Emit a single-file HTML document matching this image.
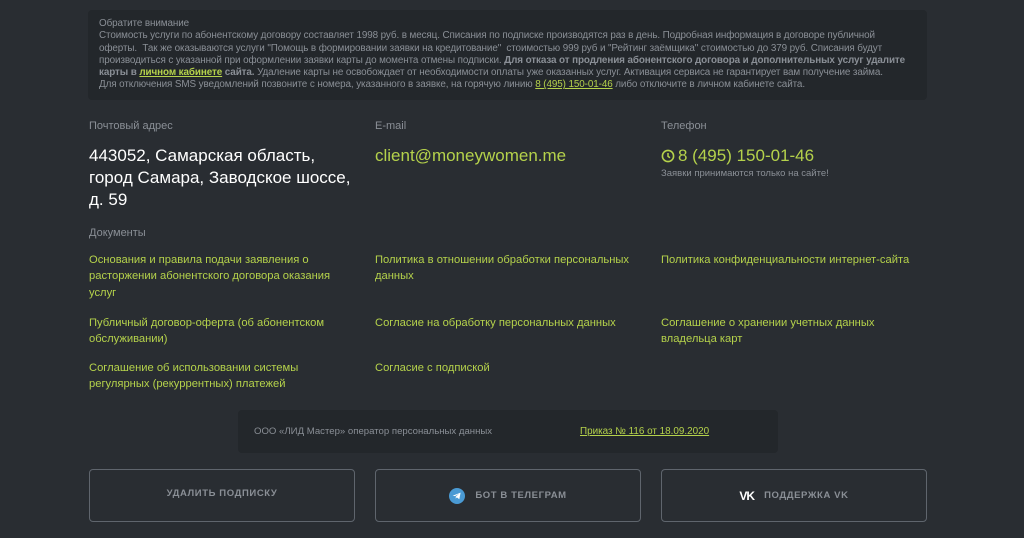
<!DOCTYPE html>
<html><head><meta charset="utf-8"><style>
*{margin:0;padding:0;box-sizing:border-box}
body{width:1024px;height:538px;background:#292d32;font-family:"Liberation Sans","DejaVu Sans",sans-serif;overflow:hidden;position:relative;color:#fff}
.note{position:absolute;left:88px;top:10px;width:839px;height:90px;background:#23272b;border-radius:4px;padding:8px 11px;font-size:9.9px;line-height:12.3px;color:#8a8f96;letter-spacing:-0.1px;white-space:nowrap}
.note b{color:#8a8f96;font-weight:bold}
.g{color:#b5d24b}
.gu{color:#b5d24b;text-decoration:underline;font-weight:bold}
.lbl{position:absolute;font-size:11px;color:#8a8f96}
.addr{position:absolute;left:89px;top:145px;font-size:17px;line-height:22px;color:#fff;width:272px}
.big{position:absolute;font-size:17px;color:#b5d24b}
.doc{position:absolute;font-size:11.2px;line-height:16.3px;color:#b5d24b;width:255px}
.bar{position:absolute;left:238px;top:410px;width:540px;height:43px;background:#23272b;border-radius:4px;font-size:9.6px;color:#8a8f96}
.btn{position:absolute;top:469px;width:266px;height:53px;border:1.5px solid #5f656d;border-radius:4px;display:flex;align-items:center;justify-content:center;font-size:9.5px;font-weight:bold;color:#8a8f96;letter-spacing:0.6px}
</style></head><body>
<div class="note">Обратите внимание<br>
Стоимость услуги по абонентскому договору составляет 1998 руб. в месяц. Списания по подписке производятся раз в день. Подробная информация в договоре публичной<br>
оферты.&nbsp; Так же оказываются услуги "Помощь в формировании заявки на кредитование"&nbsp; стоимостью 999 руб и "Рейтинг заёмщика" стоимостью до 379 руб. Списания будут<br>
производиться с указанной при оформлении заявки карты до момента отмены подписки. <b>Для отказа от продления абонентского договора и дополнительных услуг удалите<br>
карты в <span class="gu">личном кабинете</span> сайта.</b> Удаление карты не освобождает от необходимости оплаты уже оказанных услуг. Активация сервиса не гарантирует вам получение займа.<br>
Для отключения SMS уведомлений позвоните с номера, указанного в заявке, на горячую линию <span class="g" style="text-decoration:underline">8 (495) 150-01-46</span> либо отключите в личном кабинете сайта.</div>

<div class="lbl" style="left:89px;top:120px">Почтовый адрес</div>
<div class="lbl" style="left:375px;top:120px">E-mail</div>
<div class="lbl" style="left:661px;top:120px">Телефон</div>
<div class="addr">443052, Самарская область, город Самара, Заводское шоссе, д. 59</div>
<div class="big" style="left:375px;top:146px">client@moneywomen.me</div>
<div class="big" style="left:661px;top:146px;display:flex;align-items:center"><svg width="14" height="14" viewBox="0 0 14 14" style="margin-right:3px"><circle cx="7" cy="7" r="5.6" fill="none" stroke="#b5d24b" stroke-width="1.6"/><path d="M7 4v3.3l2 1.4" fill="none" stroke="#b5d24b" stroke-width="1.5"/></svg>8 (495) 150-01-46</div>
<div class="lbl" style="left:661px;top:168px;font-size:9.5px">Заявки принимаются только на сайте!</div>

<div class="lbl" style="left:89px;top:227px">Документы</div>
<div class="doc" style="left:89px;top:252px">Основания и правила подачи заявления о расторжении абонентского договора оказания услуг</div>
<div class="doc" style="left:375px;top:252px">Политика в отношении обработки персональных данных</div>
<div class="doc" style="left:661px;top:252px">Политика конфиденциальности интернет-сайта</div>
<div class="doc" style="left:89px;top:315px">Публичный договор-оферта (об абонентском обслуживании)</div>
<div class="doc" style="left:375px;top:315px">Согласие на обработку персональных данных</div>
<div class="doc" style="left:661px;top:315px;width:235px">Соглашение о хранении учетных данных владельца карт</div>
<div class="doc" style="left:89px;top:360px;width:235px">Соглашение об использовании системы регулярных (рекуррентных) платежей</div>
<div class="doc" style="left:375px;top:360px">Согласие с подпиской</div>

<div class="bar"><span style="position:absolute;left:16px;top:16px">ООО «ЛИД Мастер» оператор персональных данных</span><span style="position:absolute;left:342px;top:16px;color:#b5d24b;text-decoration:underline;font-size:9.9px">Приказ № 116 от 18.09.2020</span></div>

<div class="btn" style="left:89px;padding-bottom:4px">УДАЛИТЬ ПОДПИСКУ</div>
<div class="btn" style="left:375px"><svg width="16" height="16" viewBox="0 0 16 16" style="margin-right:10px"><circle cx="8" cy="8" r="8" fill="#4a9ad4"/><path d="M3.6 7.8l8-3.2-1.3 6.6-2.4-1.8-1.2 1.2.1-2 3.2-2.9-4 2.4z" fill="#fff"/></svg>БОТ В ТЕЛЕГРАМ</div>
<div class="btn" style="left:661px"><span style="color:#fff;font-size:12px;font-weight:900;margin-right:10px;letter-spacing:-1px">VK</span>ПОДДЕРЖКА VK</div>
</body></html>
